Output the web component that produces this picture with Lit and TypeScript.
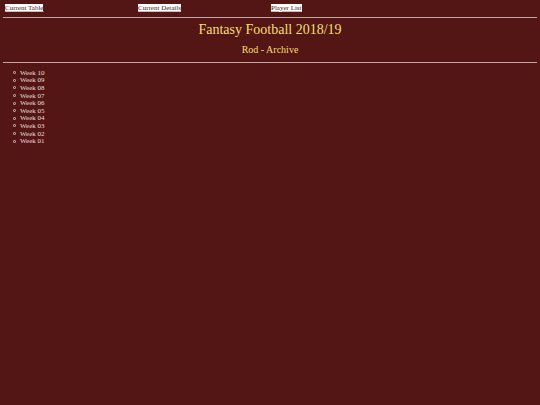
import { LitElement, html, css } from "lit";
import { customElement } from "lit/decorators.js";

const LINKS = ["Current Table", "Current Details", "Player List"];
const WEEKS = ["10", "09", "08", "07", "06", "05", "04", "03", "02", "01"];

@customElement("app-root")
export class AppRoot extends LitElement {
  static styles = css`
    :host {
      display: block;
      box-sizing: border-box;
      min-height: 100vh;
      padding: 4px 3px;
      background: #541614;
      color: #eadcdc;
      font: 7px/8px "Liberation Serif", "Times New Roman", serif;
    }
    .nav {
      display: grid;
      grid-template-columns: repeat(4, 1fr);
      padding-left: 2px;
    }
    .link {
      justify-self: start;
      background: #fff;
      color: #541614;
      text-decoration: underline;
      text-decoration-color: #cdb9c4;
    }
    .rule {
      height: 1px;
      margin: 4px 0 0;
      border: 0;
      background: #c4a3a2;
    }
    .nav + .rule {
      margin-top: 5px;
    }
    .heading {
      padding-top: 3px;
      text-align: center;
      color: #f5df72;
    }
    .title,
    .subtitle {
      margin: 0;
      font-weight: normal;
    }
    .title {
      font-size: 14px;
      line-height: 18px;
    }
    .subtitle {
      margin-top: 4px;
      font-size: 10px;
      line-height: 14px;
    }
    .heading + .rule {
      margin-top: 5px;
    }
    .weeks {
      display: grid;
      grid-auto-rows: minmax(0, 1fr);
      height: 76px;
      margin: 6px 0 0;
      padding: 0 0 0 10px;
      list-style: none;
    }
    .week {
      display: flex;
      align-items: center;
      gap: 4px;
    }
    .week::before {
      content: "";
      box-sizing: border-box;
      width: 3px;
      height: 3px;
      border: 1px solid #b79392;
      border-radius: 1px;
    }
  `;

  render() {
    return html`
      <nav class="nav">
        ${LINKS.map((label) => html`<a class="link" href="#">${label}</a>`)}
      </nav>
      <hr class="rule" />
      <header class="heading">
        <h1 class="title">Fantasy Football 2018/19</h1>
        <h2 class="subtitle">Rod - Archive</h2>
      </header>
      <hr class="rule" />
      <ul class="weeks">
        ${WEEKS.map((week) => html`<li class="week"><span>Week ${week}</span></li>`)}
      </ul>
    `;
  }
}
